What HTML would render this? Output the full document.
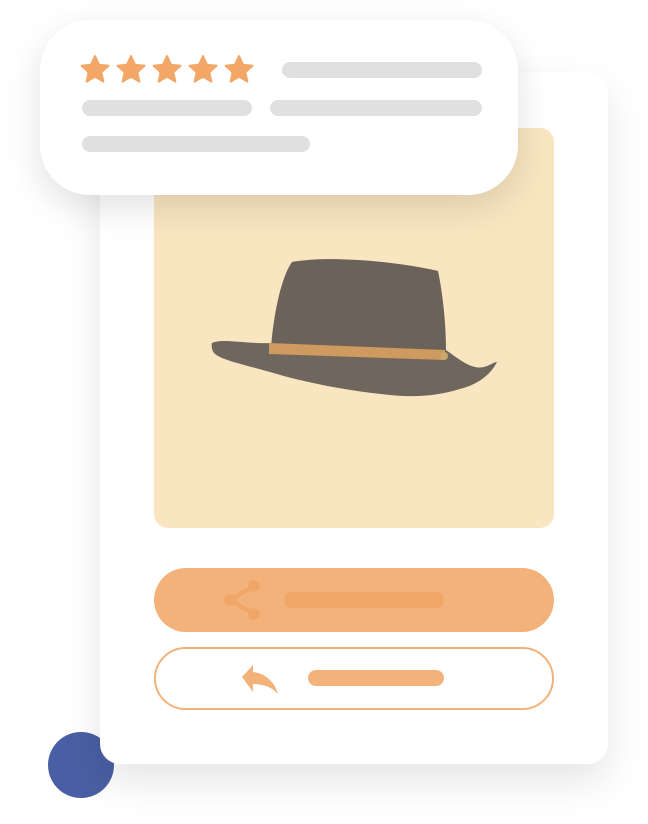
<!DOCTYPE html>
<html><head><style>
html,body{margin:0;padding:0;background:#fff;}
body{width:648px;height:824px;position:relative;overflow:hidden;font-family:"Liberation Sans",sans-serif;}
.circle{position:absolute;left:48px;top:732px;width:66px;height:66px;border-radius:50%;background:#4a5fa3;}
.card{position:absolute;left:100px;top:72px;width:508px;height:692px;background:#fff;border-radius:20px;box-shadow:0 18px 40px rgba(0,0,0,0.10);}
.img{position:absolute;left:154px;top:128px;width:400px;height:400px;background:#f9e5c0;border-radius:14px;}
.rev{position:absolute;left:40px;top:20px;width:478px;height:175px;background:#fff;border-radius:50px;box-shadow:0 12px 36px rgba(0,0,0,0.12);}
.bar{position:absolute;background:#e0e0e0;border-radius:8px;height:16px;}
.btn1{position:absolute;left:154px;top:568px;width:400px;height:64px;background:#f3b27a;border-radius:32px;}
.btn2{position:absolute;left:154px;top:647px;width:396px;height:59px;border:2px solid #f3b27a;border-radius:32px;}
.ib{position:absolute;height:16px;border-radius:8px;}
</style></head><body>
<div class="circle"></div>
<div class="card"></div>
<div class="img"></div>
<svg style="position:absolute;left:0;top:0" width="648" height="824">
  <path d="M212,343 C222,338 245,344 270,343 L446,350 C460,360 472,370 484,367 C491,365 494,362 497,362 C490,376 476,385 460,389 C440,395 418,398 390,395 C340,390 300,381 270,372 C245,365 222,360 215,354 C212,351 211,347 212,343 Z" fill="#6f665d"/>
  <path d="M271,347 C274,310 282,276 292,262 C330,255 400,262 438,271 C444,300 446,330 446,352 C390,352 320,350 271,347 Z" fill="#6b6259"/>
  <path d="M269,343 L445,350 L445,360 L269,354 Z" fill="#cf9a5f"/>
  <circle cx="444" cy="356" r="4" fill="#c8a868"/>
</svg>
<div class="rev">
  <svg style="position:absolute;left:40px;top:34px" width="180" height="34">
    <g fill="#f3a766" stroke="#f3a766" stroke-width="2" stroke-linejoin="round">
      <path id="s" d="M15,2 L19,10.8 L28.5,11.8 L21.3,18.2 L23.4,27.6 L15,22.7 L6.6,27.6 L8.7,18.2 L1.5,11.8 L11,10.8 Z"/>
      <use href="#s" x="36"/><use href="#s" x="72"/><use href="#s" x="108"/><use href="#s" x="144"/>
    </g>
  </svg>
  <div class="bar" style="left:242px;top:42px;width:200px;"></div>
  <div class="bar" style="left:42px;top:80px;width:170px;"></div>
  <div class="bar" style="left:230px;top:80px;width:212px;"></div>
  <div class="bar" style="left:42px;top:116px;width:228px;"></div>
</div>
<div class="btn1"></div>
<div class="ib" style="left:284px;top:592px;width:160px;background:#f0a666;"></div>
<div class="btn2"></div>
<div class="ib" style="left:308px;top:670px;width:136px;background:#f3b27a;"></div>
<svg style="position:absolute;left:0;top:0" width="648" height="824">
  <g stroke="#f0a666" stroke-width="4" fill="#f0a666">
    <line x1="230" y1="600" x2="254" y2="586"/>
    <line x1="230" y1="600" x2="254" y2="614"/>
    <circle cx="230" cy="600" r="6" stroke="none"/>
    <circle cx="254" cy="586" r="6" stroke="none"/>
    <circle cx="254" cy="614" r="6" stroke="none"/>
  </g>
  <path d="M242,677 L253,665 L253,672 C266,673 275,683 278,694 C272,687 263,684 253,684 L253,692 Z" fill="#f3b27a"/>
</svg>
</body></html>
